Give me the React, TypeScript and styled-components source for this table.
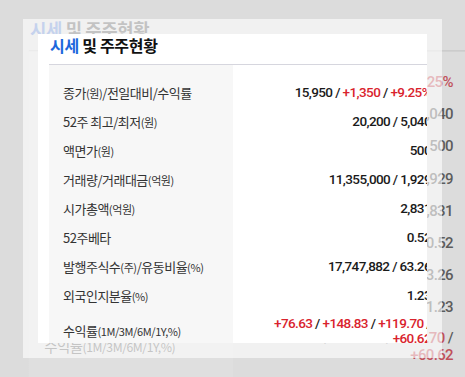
import styled, { createGlobalStyle, css } from "styled-components";

const GlobalStyle = createGlobalStyle`
  html, body {
    margin: 0;
    padding: 0;
    background: #dcdcdc;
  }
  * {
    box-sizing: border-box;
  }
`

const Stage = styled.div`
    position: relative;
    width: 465px;
    height: 377px;
    overflow: hidden;
    background: #dcdcdc;
    font-family: "Noto Sans CJK KR", "Noto Sans", sans-serif;
`

const Backdrop = styled.div`
    width: 465px;
    height: 377px;
    padding: 34px 0 0 49px;
    transform: scale(1.11);
    transform-origin: 232.5px 188.5px;
`

const ModalFrame = styled.div`
    position: absolute;
    left: 23px;
    top: 19px;
    width: 419px;
    height: 339px;
    padding: 15px;
    background: rgba(255, 255, 255, 0.6);
`

const Card = styled.div`
    width: 389px;
    height: 309px;
    padding-left: 11px;
    background: #fff;
    overflow: hidden;
`

const Info = styled.div`
    width: 392px;
`

const Title = styled.h2<{ $ghost?: boolean }>`
    margin: 0;
    padding: 0 0 7px 1px;
    font-size: 16px;
    font-weight: 700;
    line-height: 23px;
    letter-spacing: -0.3px;
    color: ${p => p.$ghost ? "#6a6a6a" : "#111"};
    border-bottom: 1px solid ${p => p.$ghost ? "#c4c4c4" : "#d6d6de"};
    width: ${p => p.$ghost ? "440px" : "auto"};

    span {
        color: ${p => p.$ghost ? "#6e8fd2" : "#1c67dc"};
    }
`

const Table = styled.div<{ $ghost?: boolean }>`
    padding: 13px 0 24px;
    background: ${p => p.$ghost
        ? "linear-gradient(to right, #dfdfdf 0 184px, transparent 184px)"
        : "linear-gradient(to right, #f7f7f7 0 184px, #fff 184px)"};
`

const Row = styled.div<{ $tall?: boolean }>`
    display: grid;
    grid-template-columns: 184px 1fr;
    align-items: center;
    min-height: 29px;
    ${p => p.$tall && css`
        padding: 6px 0;
    `}
`

const Label = styled.div<{ $ghost?: boolean }>`
    padding-left: 14px;
    font-size: 13px;
    line-height: 17px;
    letter-spacing: -0.5px;
    color: ${p => p.$ghost ? "#6e6e6e" : "#333"};
    white-space: nowrap;

    small {
        font-size: 11px;
        letter-spacing: -0.4px;
    }
`

const Value = styled.div<{ $ghost?: boolean }>`
    padding: 0 10px 0 20px;
    text-align: right;
    font-family: Roboto, "Liberation Sans", sans-serif;
    font-size: 13.5px;
    font-weight: 500;
    line-height: 15px;
    letter-spacing: -0.6px;
    color: ${p => p.$ghost ? "#5c5c5c" : "#1a1a1a"};
`

const Up = styled.span<{ $ghost?: boolean }>`
    color: ${p => p.$ghost ? "#c0505a" : "#d9232d"};
`

type Item = { label: React.ReactNode; value: (ghost: boolean) => React.ReactNode; tall?: boolean }

const rows: Item[] = [
    {
        label: <>종가<small>(원)</small>/전일대비/수익률</>,
        value: g => <>15,950 / <Up $ghost={g}>+1,350</Up> / <Up $ghost={g}>+9.25%</Up></>,
    },
    { label: <>52주 최고/최저<small>(원)</small></>, value: () => "20,200 / 5,040" },
    { label: <>액면가<small>(원)</small></>, value: () => "500" },
    { label: <>거래량/거래대금<small>(억원)</small></>, value: () => "11,355,000 / 1,929" },
    { label: <>시가총액<small>(억원)</small></>, value: () => "2,831" },
    { label: <>52주베타</>, value: () => "0.52" },
    { label: <>발행주식수<small>(주)</small>/유동비율<small>(%)</small></>, value: () => "17,747,882 / 63.26" },
    { label: <>외국인지분율<small>(%)</small></>, value: () => "1.23" },
    {
        label: <>수익률<small>(1M/3M/6M/1Y,%)</small></>,
        value: g => <>
            <Up $ghost={g}>+76.63</Up> / <Up $ghost={g}>+148.83</Up> / <Up $ghost={g}>+119.70</Up> / <Up $ghost={g}>+60.62</Up>
        </>,
        tall: true,
    },
]

const StockInfo = ({ ghost = false }: { ghost?: boolean }) => {
    return <Info>
        <Title $ghost={ghost}><span>시세</span> 및 주주현황</Title>
        <Table $ghost={ghost}>
            {rows.map((r, i) => (
                <Row key={i} $tall={r.tall}>
                    <Label $ghost={ghost}>{r.label}</Label>
                    <Value $ghost={ghost}>{r.value(ghost)}</Value>
                </Row>
            ))}
        </Table>
    </Info>
}

const App = () => {
    return <>
        <GlobalStyle />
        <Stage>
            <Backdrop>
                <StockInfo ghost />
            </Backdrop>
            <ModalFrame>
                <Card>
                    <StockInfo />
                </Card>
            </ModalFrame>
        </Stage>
    </>
}

export default App;
